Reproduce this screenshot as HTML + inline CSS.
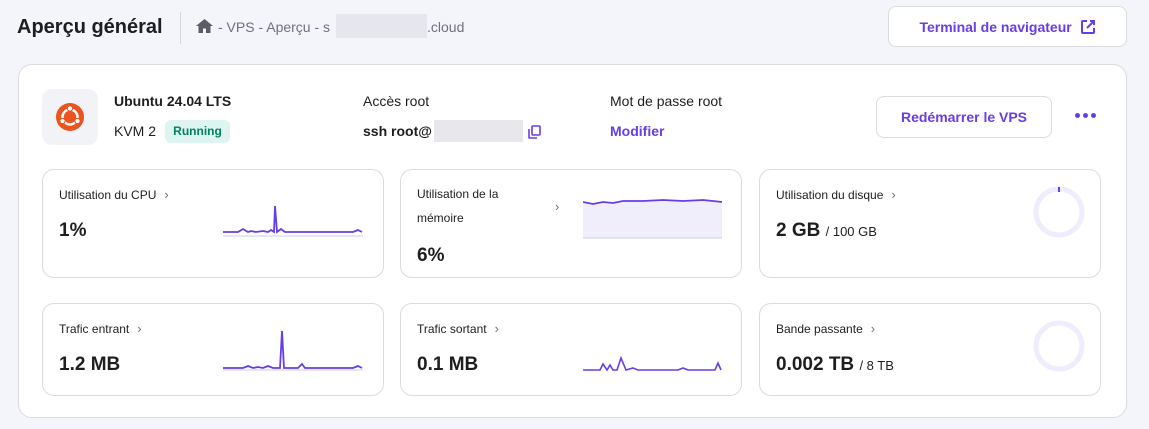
<!DOCTYPE html>
<html><head><meta charset="utf-8"><style>
*{box-sizing:border-box;margin:0;padding:0}
body{width:1149px;height:429px;background:#f4f4fb;font-family:"Liberation Sans",sans-serif;color:#1d1e20;position:relative;overflow:hidden}
.a{position:absolute}
.btn{position:absolute;background:#fff;border:1px solid #dadce0;border-radius:8px;color:#673de6;font-weight:bold;font-size:14px;display:flex;align-items:center;justify-content:center}
.card{position:absolute;background:#fff;border:1px solid #dadce0;border-radius:12px}
.lbl{position:absolute;left:16px;top:17px;font-size:12px;color:#1d1e20}
.lbl i{font-style:normal;color:#6d7081;margin-left:8px;font-size:13px}
.val{position:absolute;left:16px;font-size:19px;font-weight:bold}
.val small{font-size:13px;font-weight:normal}
.dot{position:absolute;width:5px;height:5px;border-radius:50%;background:#673de6;top:113px}
</style></head><body>
<div class="a" style="left:17px;top:16px;font-size:20px;font-weight:bold">Aperçu général</div>
<div class="a" style="left:180px;top:12px;width:1px;height:32px;background:#d5d5df"></div>
<svg class="a" style="left:196px;top:19px" width="17" height="14" viewBox="0 0 17 14"><path d="M8.5 0L0 7h2.5v7h4.5V9.5h3V14h4.5V7H17z" fill="#5a5c6a"/></svg>
<div class="a" style="left:218px;top:19px;font-size:14px;color:#6d7081">- VPS - Aperçu - s</div>
<div class="a" style="left:336px;top:14px;width:91px;height:24px;background:#e6e6ee"></div>
<div class="a" style="left:427px;top:19px;font-size:14px;color:#6d7081">.cloud</div>
<div class="btn" style="left:888px;top:6px;width:239px;height:41px">Terminal de navigateur&nbsp;&nbsp;<svg width="16" height="16" viewBox="0 0 16 16" fill="none" stroke="#673de6" stroke-width="2"><path d="M7 2H3a1 1 0 0 0-1 1v10a1 1 0 0 0 1 1h10a1 1 0 0 0 1-1V9M10 2h4v4M14 2L7 9"/></svg></div>
<div class="a" style="left:18px;top:64px;width:1109px;height:354px;background:#fff;border:1px solid #dadce0;border-radius:14px"></div>
<div class="a" style="left:42px;top:89px;width:56px;height:56px;background:#f2f3f6;border-radius:10px"></div>
<svg class="a" style="left:55px;top:102px" width="30" height="30" viewBox="0 0 30 30"><circle cx="15" cy="15" r="14" fill="#e95420"/><circle cx="15" cy="15" r="7.5" fill="none" stroke="#fff" stroke-width="2.5"/><circle cx="15" cy="6.5" r="2.6" fill="#fff" stroke="#e95420" stroke-width="1"/><circle cx="7.5" cy="19" r="2.6" fill="#fff" stroke="#e95420" stroke-width="1"/><circle cx="22.5" cy="19" r="2.6" fill="#fff" stroke="#e95420" stroke-width="1"/></svg>
<div class="a" style="left:114px;top:93px;font-size:14px;font-weight:bold">Ubuntu 24.04 LTS</div>
<div class="a" style="left:114px;top:123px;font-size:14px">KVM 2</div>
<div class="a" style="left:165px;top:120px;width:65px;height:23px;background:#def4f0;border-radius:6px;color:#008361;font-size:12px;font-weight:bold;text-align:center;line-height:23px">Running</div>
<div class="a" style="left:363px;top:93px;font-size:14px">Accès root</div>
<div class="a" style="left:363px;top:123px;font-size:14px;font-weight:bold">ssh root@</div>
<div class="a" style="left:434px;top:120px;width:89px;height:22px;background:#e8e8ec"></div>
<svg class="a" style="left:528px;top:125px" width="13" height="14" viewBox="0 0 13 14" fill="none" stroke="#673de6" stroke-width="1.6"><rect x="4" y="1" width="8" height="9" rx="1"/><path d="M1 4v8.5a.5.5 0 0 0 .5.5H9"/></svg>
<div class="a" style="left:610px;top:93px;font-size:14px">Mot de passe root</div>
<div class="a" style="left:610px;top:123px;font-size:14px;font-weight:bold;color:#673de6">Modifier</div>
<div class="btn" style="left:876px;top:96px;width:176px;height:42px">Redémarrer le VPS</div>
<div class="dot" style="left:1075px"></div><div class="dot" style="left:1083px"></div><div class="dot" style="left:1091px"></div>

<div class="card" style="left:42px;top:169px;width:342px;height:109px"><div class="lbl">Utilisation du CPU<i>›</i></div><div class="val" style="top:50px">1%</div>
<svg class="a" style="left:180px;top:32px" width="140" height="40"><line x1="0" y1="34" x2="140" y2="34" stroke="#c9d2ec"/><polyline points="0,30 15,30 20,27 25,30 28,29 33,30 40,29 45,30 48,28 51,30 52,4 54,30 58,27 62,30 80,30 100,30 130,30 135,28 139,30" fill="none" stroke="#673de6" stroke-width="1.8"/></svg></div>
<div class="card" style="left:400px;top:169px;width:342px;height:109px"><div class="lbl" style="line-height:24px;top:12px">Utilisation de la<br>mémoire</div><div class="a" style="left:154px;top:29px;color:#6d7081;font-size:13px">›</div><div class="val" style="top:75px">6%</div>
<svg class="a" style="left:182px;top:26px" width="140" height="44"><polygon points="0,6 10,8 20,6 30,7 40,5 60,5 80,4 100,5 120,4 130,5 139,6 139,42 0,42" fill="#f1eefc"/><line x1="0" y1="42" x2="139" y2="42" stroke="#c9d2ec"/><polyline points="0,6 10,8 20,6 30,7 40,5 60,5 80,4 100,5 120,4 130,5 139,6" fill="none" stroke="#673de6" stroke-width="1.8"/></svg></div>
<div class="card" style="left:759px;top:169px;width:342px;height:109px"><div class="lbl">Utilisation du disque<i>›</i></div><div class="val" style="top:50px">2 GB <small>/ 100 GB</small></div>
<svg class="a" style="left:271px;top:16px" width="56" height="56"><circle cx="28" cy="26" r="23" fill="none" stroke="#efecfd" stroke-width="5"/><line x1="28" y1="1" x2="28" y2="6" stroke="#673de6" stroke-width="2"/></svg></div>

<div class="card" style="left:42px;top:303px;width:342px;height:93px"><div class="lbl">Trafic entrant<i>›</i></div><div class="val" style="top:50px">1.2 MB</div>
<svg class="a" style="left:180px;top:24px" width="140" height="44"><line x1="0" y1="42" x2="140" y2="42" stroke="#c9d2ec"/><polyline points="0,40 20,40 25,38 30,40 35,39 40,40 45,38 50,40 57,40 59,3 61,40 75,40 79,36 82,40 100,40 130,40 135,38 139,40" fill="none" stroke="#673de6" stroke-width="1.8"/></svg></div>
<div class="card" style="left:400px;top:303px;width:342px;height:93px"><div class="lbl">Trafic sortant<i>›</i></div><div class="val" style="top:50px">0.1 MB</div>
<svg class="a" style="left:182px;top:44px" width="140" height="24"><polyline points="0,22 17,22 20,16 24,22 27,17 30,22 34,22 38,10 43,22 50,20 55,22 95,22 100,20 105,22 132,22 135,15 138,22" fill="none" stroke="#673de6" stroke-width="1.6"/></svg></div>
<div class="card" style="left:759px;top:303px;width:342px;height:93px"><div class="lbl">Bande passante<i>›</i></div><div class="val" style="top:50px">0.002 TB <small>/ 8 TB</small></div>
<svg class="a" style="left:271px;top:16px" width="56" height="56"><circle cx="28" cy="26" r="23" fill="none" stroke="#efecfd" stroke-width="5"/></svg></div>
</body></html>
